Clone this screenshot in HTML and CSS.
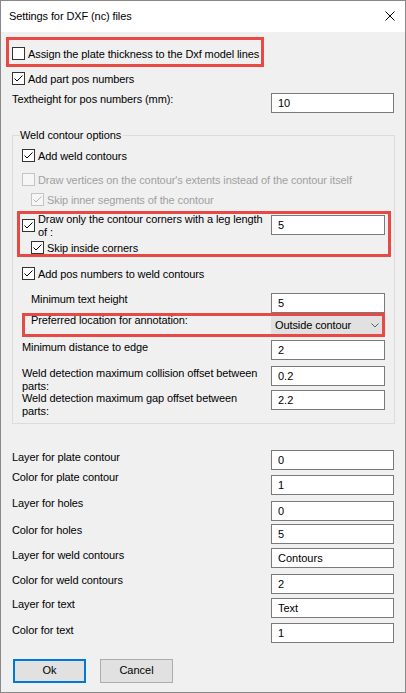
FILE: index.html
```html
<!DOCTYPE html>
<html>
<head>
    <title>Settings for DXF (nc) files</title>
    <link rel="stylesheet" href="styles.css">
</head>
<body>
    <div class="window">
        <div class="titlebar">
            <span class="title">Settings for DXF (nc) files</span>
            <svg class="close" width="10" height="10" viewBox="0 0 10 10"><path d="M0.5 0.5L9.5 9.5M9.5 0.5L0.5 9.5" stroke="#000" stroke-width="1" fill="none"/></svg>
        </div>
        <div class="content">
            <div class="mark mark-assign">
                <div class="check">
                    <span class="box"></span>
                    <span class="text">Assign the plate thickness to the Dxf model lines</span>
                </div>
            </div>
            <div class="check row-pos">
                <span class="box"><svg width="11" height="11" viewBox="0 0 11 11"><path d="M1.5 5.5L4 8L9.5 2.5" fill="none" stroke="#000"/></svg></span>
                <span class="text">Add part pos numbers</span>
            </div>
            <div class="field row-textheight">
                <span class="label">Textheight for pos numbers (mm):</span>
                <input class="entry" type="text" value="10">
            </div>

            <div class="group">
                <div class="group-title">Weld contour options</div>
                <div class="check row-weld">
                    <span class="box"><svg width="11" height="11" viewBox="0 0 11 11"><path d="M1.5 5.5L4 8L9.5 2.5" fill="none" stroke="#000"/></svg></span>
                    <span class="text">Add weld contours</span>
                </div>
                <div class="check disabled row-vertices">
                    <span class="box"></span>
                    <span class="text">Draw vertices on the contour's extents instead of the contour itself</span>
                </div>
                <div class="check disabled indent row-inner">
                    <span class="box"><svg width="11" height="11" viewBox="0 0 11 11"><path d="M1.5 5.5L4 8L9.5 2.5" fill="none" stroke="#b4b4b4"/></svg></span>
                    <span class="text">Skip inner segments of the contour</span>
                </div>

                <div class="mark mark-corners">
                    <div class="field">
                        <div class="check check-multi">
                            <span class="box"><svg width="11" height="11" viewBox="0 0 11 11"><path d="M1.5 5.5L4 8L9.5 2.5" fill="none" stroke="#000"/></svg></span>
                            <span class="text">Draw only the contour corners with a leg length<br>of :</span>
                        </div>
                        <input class="entry" type="text" value="5">
                    </div>
                    <div class="check indent row-inside">
                        <span class="box"><svg width="11" height="11" viewBox="0 0 11 11"><path d="M1.5 5.5L4 8L9.5 2.5" fill="none" stroke="#000"/></svg></span>
                        <span class="text">Skip inside corners</span>
                    </div>
                </div>

                <div class="check row-posweld">
                    <span class="box"><svg width="11" height="11" viewBox="0 0 11 11"><path d="M1.5 5.5L4 8L9.5 2.5" fill="none" stroke="#000"/></svg></span>
                    <span class="text">Add pos numbers to weld contours</span>
                </div>
                <div class="field indent row-minheight">
                    <span class="label">Minimum text height</span>
                    <input class="entry" type="text" value="5">
                </div>

                <div class="mark mark-location">
                    <span class="label">Preferred location for annotation:</span>
                    <div class="combo">
                        <span>Outside contour</span>
                        <svg width="8" height="5" viewBox="0 0 8 5"><path d="M0.5 0.5L4 4L7.5 0.5" fill="none" stroke="#606060"/></svg>
                    </div>
                </div>

                <div class="field row-edge">
                    <span class="label low">Minimum distance to edge</span>
                    <input class="entry" type="text" value="2">
                </div>
                <div class="field row-collision">
                    <span class="label low">Weld detection maximum collision offset between<br>parts:</span>
                    <input class="entry" type="text" value="0.2">
                </div>
                <div class="field row-gap">
                    <span class="label lower">Weld detection maximum gap offset between<br>parts:</span>
                    <input class="entry" type="text" value="2.2">
                </div>
            </div>

            <div class="field row-layerplate">
                <span class="label low">Layer for plate contour</span>
                <input class="entry" type="text" value="0">
            </div>
            <div class="field row-5">
                <span class="label up">Color for plate contour</span>
                <input class="entry" type="text" value="1">
            </div>
            <div class="field row-6">
                <span class="label up">Layer for holes</span>
                <input class="entry" type="text" value="0">
            </div>
            <div class="field row-3">
                <span class="label">Color for holes</span>
                <input class="entry" type="text" value="5">
            </div>
            <div class="field row-4">
                <span class="label low">Layer for weld contours</span>
                <input class="entry" type="text" value="Contours">
            </div>
            <div class="field row-6">
                <span class="label">Color for weld contours</span>
                <input class="entry" type="text" value="2">
            </div>
            <div class="field row-4">
                <span class="label">Layer for text</span>
                <input class="entry" type="text" value="Text">
            </div>
            <div class="field row-5">
                <span class="label low">Color for text</span>
                <input class="entry" type="text" value="1">
            </div>

            <div class="buttons">
                <button class="btn btn-default">Ok</button>
                <button class="btn">Cancel</button>
            </div>
        </div>
    </div>
</body>
</html>
```

FILE: styles.css
```css
body {
    margin: 0;
    font-family: "Liberation Sans", Arial, sans-serif;
    font-size: 11px;
    letter-spacing: -0.1px;
    color: #000;
}

.window {
    width: 406px;
    height: 693px;
    box-sizing: border-box;
    border: 1px solid #888;
    background-color: #f0f0f0;
}

.titlebar {
    height: 31px;
    background-color: #fff;
    display: flex;
    align-items: center;
    justify-content: space-between;
    padding: 0 10px 0 8px;
}

.title {
    line-height: 13px;
}

.close {
    display: block;
    margin-top: -1px;
}

.content {
    padding: 0 11px;
}

/* checkbox rows */
.check {
    display: flex;
    align-items: flex-start;
    gap: 3px;
    height: 13px;
    white-space: nowrap;
}

.box {
    width: 13px;
    height: 13px;
    box-sizing: border-box;
    border: 1px solid #333;
    background-color: #fff;
    flex-shrink: 0;
}

.box svg {
    display: block;
}

.text {
    line-height: 13px;
    padding-top: 1px;
}

.disabled .text {
    color: #a0a0a0;
}

.disabled .box {
    border-color: #c4c4c4;
    background-color: #f6f6f6;
}

.indent {
    padding-left: 9px;
}

/* label + textbox rows */
.field {
    display: flex;
    justify-content: space-between;
    align-items: flex-start;
    height: 20px;
}

.label {
    line-height: 13px;
    white-space: nowrap;
}

.label.low {
    margin-top: 1px;
}

.label.lower {
    margin-top: 2px;
}

.label.up {
    margin-top: -4px;
}

.entry {
    width: 123px;
    height: 20px;
    box-sizing: border-box;
    margin: 0;
    border: 1px solid #7a7a7a;
    background-color: #fff;
    padding: 0 0 0 6px;
    font: inherit;
    letter-spacing: 0;
    color: #000;
    outline: none;
}

/* red annotation frames */
.mark {
    border: 3px solid #e64a45;
    box-sizing: border-box;
}

.mark-assign {
    margin: 5px 0 0 -6px;
    width: 258px;
    height: 30px;
    padding: 7px 0 0 3px;
}

.row-pos {
    margin-top: 5px;
}

.row-textheight {
    margin-top: 8px;
}

/* weld contour group box */
.group {
    margin: 22px -1px 0 0;
    border: 1px solid #dcdcdc;
    padding: 0 9px 13px 9px;
}

.group .entry {
    width: 114px;
}

.group-title {
    margin: -8px 0 0 -2px;
    width: max-content;
    padding: 0 2px 0 0;
    line-height: 15px;
    background-color: #f0f0f0;
}

.row-weld {
    margin-top: 6px;
}

.row-vertices {
    margin-top: 11px;
}

.row-inner {
    margin-top: 7px;
}

.mark-corners {
    margin: 5px -6px 0 -5px;
    height: 46px;
    padding: 1px 3px 0 2px;
}

.check-multi .box {
    margin-top: 4px;
}

.check-multi .text {
    padding-top: 0;
    margin-top: -2px;
}

.row-inside {
    margin-top: 6px;
}

.row-posweld {
    margin-top: 10px;
}

.row-minheight {
    margin-top: 13px;
}

.mark-location {
    height: 24px;
    display: flex;
    justify-content: space-between;
    align-items: flex-start;
    padding-left: 6px;
}

.mark-location .label {
    margin-top: -2px;
}

.combo {
    width: 111px;
    height: 18px;
    box-sizing: border-box;
    background-color: #e1e1e1;
    display: flex;
    align-items: center;
    justify-content: space-between;
    padding: 0 3px 0 4px;
    line-height: 18px;
}

.combo svg {
    display: block;
}

.row-edge {
    margin-top: 3px;
}

.row-collision {
    margin-top: 6px;
}

.row-gap {
    margin-top: 4px;
}

/* rows below the group */
.row-layerplate {
    margin-top: 26px;
}

.row-3 {
    margin-top: 3px;
}

.row-4 {
    margin-top: 4px;
}

.row-5 {
    margin-top: 5px;
}

.row-6 {
    margin-top: 6px;
}

.buttons {
    display: flex;
    gap: 14px;
    margin-top: 16px;
    padding-left: 1px;
}

.btn {
    width: 73px;
    height: 24px;
    box-sizing: border-box;
    margin: 0;
    padding: 0 0 2px 0;
    background-color: #e1e1e1;
    border: 1px solid #adadad;
    font: inherit;
    color: #000;
}

.btn-default {
    border: 2px solid #0078d7;
}
```
